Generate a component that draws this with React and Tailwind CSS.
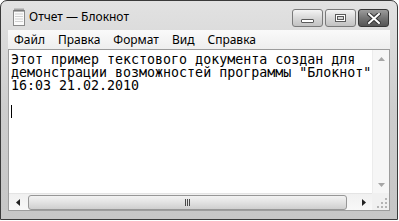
import React from 'react'

const mono = { fontFamily: '"DejaVu Sans Mono", "Liberation Mono", monospace' }

const docText = 'Этот пример текстового документа создан для\nдемонстрации возможностей программы "Блокнот"\n16:03 21.02.2010\n '

const NotepadIcon = () => (
  <svg width="14" height="18" viewBox="0 0 14 18" className="shrink-0">
    <rect x="1.5" y="2.5" width="11" height="15" fill="#fafafa" stroke="#8a8a8a" />
    <line x1="3" y1="6" x2="11" y2="6" stroke="#d0d0d0" />
    <line x1="3" y1="8.5" x2="11" y2="8.5" stroke="#d0d0d0" />
    <line x1="3" y1="11" x2="11" y2="11" stroke="#d0d0d0" />
    <line x1="3" y1="13.5" x2="11" y2="13.5" stroke="#d0d0d0" />
    {[3, 5, 7, 9, 11].map((x) => (
      <rect key={x} x={x - 0.5} y="0.5" width="1" height="3.5" fill="#6a6a6a" />
    ))}
  </svg>
)

const CaptionButton = ({ kind }) => {
  const close = kind === 'close'
  return (
    <div
      className={`w-[31px] h-[18px] rounded-[3px] border flex items-center justify-center ${
        close
          ? 'border-[#363636] bg-gradient-to-b from-[#9c9c9c] via-[#747474] to-[#555555]'
          : 'border-[#7a7a7a] bg-gradient-to-b from-[#f4f4f4] via-[#d8d8d8] to-[#c2c2c2]'
      }`}
    >
      {kind === 'min' && (
        <div className="w-[13px] h-[4px] mt-[5px] bg-white border border-[#5a5a5a] rounded-[1px]" />
      )}
      {kind === 'max' && (
        <div className="w-[11px] h-[8px] border border-[#5a5a5a] bg-white flex items-center justify-center">
          <div className="w-[7px] h-[4px] border border-[#5a5a5a] bg-[#d8d8d8]" />
        </div>
      )}
      {close && (
        <svg width="14" height="11" viewBox="0 0 14 11">
          <path d="M2 1 L12 10 M12 1 L2 10" stroke="#333333" strokeWidth="4" strokeLinecap="square" />
          <path d="M2 1 L12 10 M12 1 L2 10" stroke="#ffffff" strokeWidth="2" strokeLinecap="square" />
        </svg>
      )}
    </div>
  )
}

const Tri = ({ dir, color }) => {
  const pts = {
    up: '0,4 3.5,0 7,4',
    down: '0,0 7,0 3.5,4',
    left: '4,0 4,7 0,3.5',
    right: '0,0 0,7 4,3.5',
  }[dir]
  const vertical = dir === 'up' || dir === 'down'
  return (
    <svg width={vertical ? 7 : 4} height={vertical ? 4 : 7} viewBox={vertical ? '0 0 7 4' : '0 0 4 7'}>
      <polygon points={pts} fill={color} />
    </svg>
  )
}

export default function App() {
  const menu = ['Файл', 'Правка', 'Формат', 'Вид', 'Справка']
  return (
    <div className="w-[399px] h-[221px] bg-white overflow-hidden" style={{ fontFamily: '"Noto Sans", "Open Sans", sans-serif' }}>
      <div className="w-[398px] h-[220px] flex flex-col rounded-t-[7px] border border-[#3a3a3a] bg-gradient-to-b from-[#e2e2e2] via-[#cdcdcd] to-[#c6c6c6]">
        {/* Title bar */}
        <div className="h-[29px] flex items-start shrink-0">
          <div className="flex items-center gap-[3px] pl-[11px] pt-[7px]">
            <NotepadIcon />
            <span className="text-[12px] text-black leading-[18px]">Отчет — Блокнот</span>
          </div>
          <div className="ml-auto mr-[8px] mt-[8px] flex gap-[2px]">
            <CaptionButton kind="min" />
            <CaptionButton kind="max" />
            <CaptionButton kind="close" />
          </div>
        </div>

        {/* Client area */}
        <div className="flex-1 flex flex-col px-[7px] pb-[8px] min-h-0">
          <div className="h-[19px] shrink-0 flex items-center bg-gradient-to-b from-[#fafafa] to-[#eeeeee] text-[12px] text-black">
            {menu.map((m) => (
              <span key={m} className="px-[6px] mr-[1px] leading-[18px]">{m}</span>
            ))}
          </div>

          <div className="flex-1 flex flex-col border border-[#9c9c9c] bg-white min-h-0">
            <div className="flex-1 flex min-h-0">
              <div className="flex-1 flex flex-col pl-[2px] pt-[3px]">
                <div className="text-[13.3px] leading-[13px] text-black whitespace-pre" style={mono}>
                  {docText}
                </div>
                <div className="h-[13px] flex items-center">
                  <div className="w-[1px] h-[13px] bg-black" />
                </div>
              </div>
              {/* vertical scrollbar */}
              <div className="w-[17px] flex flex-col bg-[#f6f6f6] border-l border-[#ececec]">
                <div className="h-[17px] flex items-center justify-center">
                  <Tri dir="up" color="#a6a6a6" />
                </div>
                <div className="flex-1" />
                <div className="h-[17px] flex items-center justify-center">
                  <Tri dir="down" color="#a6a6a6" />
                </div>
              </div>
            </div>
            {/* horizontal scrollbar */}
            <div className="h-[17px] flex shrink-0">
              <div className="flex-1 flex items-center bg-gradient-to-b from-[#f0f0f0] to-[#f8f8f8] border-t border-[#e4e4e4]">
                <div className="w-[17px] h-full flex items-center justify-center">
                  <Tri dir="left" color="#222222" />
                </div>
                <div className="ml-[2px] w-[319px] h-[15px] rounded-[3px] border border-[#979797] bg-gradient-to-b from-[#f3f3f3] via-[#e2e2e2] to-[#cfcfcf] flex items-center justify-center gap-[1px]">
                  <div className="w-[1px] h-[7px] bg-[#4a4a4a]" />
                  <div className="w-[1px] h-[7px] bg-[#4a4a4a]" />
                  <div className="w-[1px] h-[7px] bg-[#4a4a4a]" />
                </div>
                <div className="flex-1" />
                <div className="w-[17px] h-full flex items-center justify-center">
                  <Tri dir="right" color="#222222" />
                </div>
              </div>
              <div className="w-[17px] bg-[#f0f0f0] flex items-end justify-end p-[2px]">
                <svg width="11" height="11" viewBox="0 0 11 11">
                  {[[9, 1], [9, 5], [5, 5], [9, 9], [5, 9], [1, 9]].map(([x, y]) => (
                    <rect key={`${x}-${y}`} x={x} y={y} width="2" height="2" fill="#b4b4b4" />
                  ))}
                </svg>
              </div>
            </div>
          </div>
        </div>
      </div>
    </div>
  )
}
